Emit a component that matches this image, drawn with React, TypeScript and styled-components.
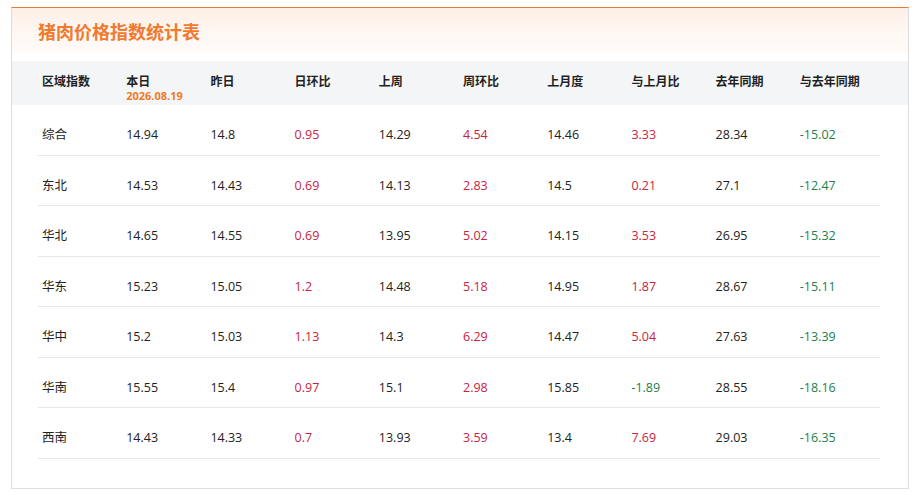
import React from "react";
import styled, { createGlobalStyle } from "styled-components";

type Trend = "up" | "down" | "none";

interface RowData {
  area: string;
  values: (string | number)[];
}

const COLUMNS = [
  "区域指数",
  "本日",
  "昨日",
  "日环比",
  "上周",
  "周环比",
  "上月度",
  "与上月比",
  "去年同期",
  "与去年同期",
];

// columns that hold a change ratio get a colour
const RATIO_COLS = [3, 5, 7, 9];

const ROWS: RowData[] = [
  { area: "综合", values: [14.94, 14.8, 0.95, 14.29, 4.54, 14.46, 3.33, 28.34, -15.02] },
  { area: "东北", values: [14.53, 14.43, 0.69, 14.13, 2.83, 14.5, 0.21, 27.1, -12.47] },
  { area: "华北", values: [14.65, 14.55, 0.69, 13.95, 5.02, 14.15, 3.53, 26.95, -15.32] },
  { area: "华东", values: [15.23, 15.05, 1.2, 14.48, 5.18, 14.95, 1.87, 28.67, -15.11] },
  { area: "华中", values: [15.2, 15.03, 1.13, 14.3, 6.29, 14.47, 5.04, 27.63, -13.39] },
  { area: "华南", values: [15.55, 15.4, 0.97, 15.1, 2.98, 15.85, -1.89, 28.55, -18.16] },
  { area: "西南", values: [14.43, 14.33, 0.7, 13.93, 3.59, 13.4, 7.69, 29.03, -16.35] },
];

const GlobalStyle = createGlobalStyle`
  html, body {
    margin: 0;
    padding: 0;
    background: #ffffff;
  }
  body {
    font-family: "Open Sans", "Noto Sans CJK SC", sans-serif;
    color: #222;
  }
`;

const trendOf = (col: number, v: number): Trend => {
  if (!RATIO_COLS.includes(col)) return "none";
  return v < 0 ? "down" : "up";
};

const App = () => {
  return (
    <>
      <GlobalStyle />
      <PageSC>
        <CardSC>
          <TitleBarSC>
            <TitleSC>猪肉价格指数统计表</TitleSC>
          </TitleBarSC>

          <HeadSC>
            <GridRowSC>
              {COLUMNS.map((c) => (
                <HeadCellSC key={c}>
                  {c}
                  {c === "本日" && <DateSC>2026.08.19</DateSC>}
                </HeadCellSC>
              ))}
            </GridRowSC>
          </HeadSC>

          <BodySC>
            {ROWS.map((r) => (
              <BodyRowSC key={r.area}>
                <CellSC $trend="none">{r.area}</CellSC>
                {r.values.map((v, i) => (
                  <CellSC key={i} $trend={trendOf(i + 1, Number(v))}>
                    {v}
                  </CellSC>
                ))}
              </BodyRowSC>
            ))}
          </BodySC>
        </CardSC>
      </PageSC>
    </>
  );
};

const PageSC = styled("div")`
  width: 921px;
  height: 498px;
  box-sizing: border-box;
  padding: 7px 12px 9px 11px;
`;

const CardSC = styled("div")`
  height: 100%;
  box-sizing: border-box;
  border: 1px solid #dedede;
  border-top: 1px solid #e8793a;
  background: #ffffff;
`;

const TitleBarSC = styled("div")`
  height: 45px;
  padding: 0 26px;

  display: flex;
  align-items: center;

  background: linear-gradient(180deg, #fdefe6 0%, #fef7f3 55%, #fffbf9 100%);
`;

const TitleSC = styled("h1")`
  margin: 0;
  color: #f07a2e;
  font-family: "Noto Sans CJK SC", sans-serif;
  font-size: 18px;
  font-weight: 700;
`;

const HeadSC = styled("div")`
  margin-top: 8px;
  height: 44px;
  padding: 0 28px 0 26px;
  background: #f4f5f7;
`;

const GridRowSC = styled("div")`
  display: grid;
  grid-template-columns: repeat(10, 1fr);
  height: 100%;
`;

const HeadCellSC = styled("div")`
  padding: 12px 0 0 4px;

  display: flex;
  flex-direction: column;

  font-family: "Noto Sans CJK SC", sans-serif;
  font-size: 12px;
  font-weight: 700;
  line-height: 16px;
  color: #1f1f1f;
`;

const DateSC = styled("span")`
  color: #f07a24;
  font-family: "Open Sans", sans-serif;
  font-size: 11px;
  font-weight: 700;
  line-height: 14px;
`;

const BodySC = styled("div")`
  padding: 0 28px 0 26px;
`;

const BodyRowSC = styled("div")`
  height: 50.5px;
  box-sizing: border-box;
  padding-bottom: 9.5px;

  display: grid;
  grid-template-columns: repeat(10, 1fr);
  align-items: end;

  border-bottom: 1px solid #e8e8e8;
`;

const CellSC = styled("div")<{ $trend: Trend }>`
  padding-left: 4px;
  font-size: 12.5px;
  line-height: 20px;
  color: ${({ $trend }) =>
    $trend === "up" ? "#c8243e" : $trend === "down" ? "#1b7f4a" : "#222222"};
`;

export default App;
